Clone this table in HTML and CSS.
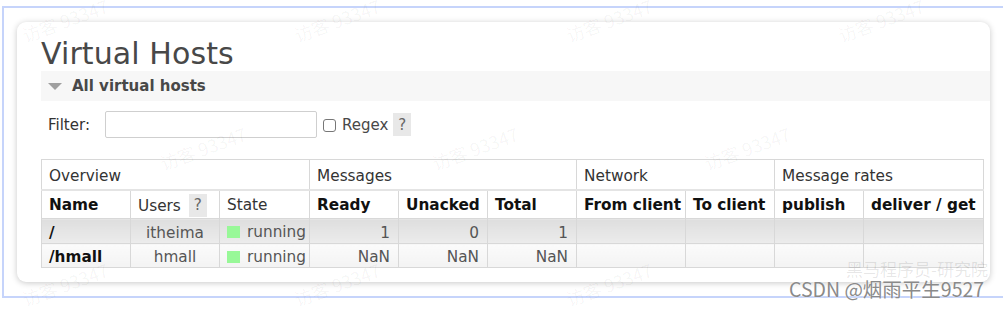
FILE: index.html
```html
<!DOCTYPE html>
<html lang="zh">
<head>
<meta charset="utf-8">
<title>Virtual Hosts</title>
<link rel="stylesheet" href="styles.css">
</head>
<body>
<div class="frame"></div>
<div class="page">
  <div class="card">
    <h1 class="title">Virtual Hosts</h1>
    <div class="section-bar"><span class="tri"></span><span>All virtual hosts</span></div>
    <div class="filter-row">
      <label class="filter-label">Filter:</label>
      <input class="filter-input" type="text">
      <span class="check"></span>
      <span class="regex">Regex</span>
      <span class="help">?</span>
    </div>
    <table class="list">
      <colgroup>
        <col class="w88"><col class="w89"><col class="w90"><col class="w89"><col class="w89"><col class="w89"><col class="w109"><col class="w89"><col class="w89"><col class="w120">
      </colgroup>
      <thead>
        <tr class="group">
          <th colspan="3">Overview</th>
          <th colspan="3">Messages</th>
          <th colspan="2">Network</th>
          <th colspan="2">Message rates</th>
        </tr>
        <tr class="cols">
          <th>Name</th>
          <th class="plain">Users <span class="help small">?</span></th>
          <th class="plain">State</th>
          <th>Ready</th>
          <th>Unacked</th>
          <th>Total</th>
          <th>From client</th>
          <th>To client</th>
          <th>publish</th>
          <th>deliver / get</th>
        </tr>
      </thead>
      <tbody>
        <tr class="alt1">
          <td class="name">/</td>
          <td class="c">itheima</td>
          <td><span class="state"><span class="green"></span>running</span></td>
          <td class="r">1</td>
          <td class="r">0</td>
          <td class="r">1</td>
          <td></td><td></td><td></td><td></td>
        </tr>
        <tr class="alt2">
          <td class="name">/hmall</td>
          <td class="c">hmall</td>
          <td><span class="state"><span class="green"></span>running</span></td>
          <td class="r">NaN</td>
          <td class="r">NaN</td>
          <td class="r">NaN</td>
          <td></td><td></td><td></td><td></td>
        </tr>
      </tbody>
    </table>
  </div>
</div>
<div class="wm w1">访客 93347</div>
<div class="wm w2">访客 93347</div>
<div class="wm w3">访客 93347</div>
<div class="wm w4">访客 93347</div>
<div class="wm w5">访客 93347</div>
<div class="wm w6">访客 93347</div>
<div class="wm w7">访客 93347</div>
<div class="wm w9">访客 93347</div>
<div class="wm w10">访客 93347</div>
<div class="wm w11">访客 93347</div>
<div class="mark-hm">黑马程序员-研究院</div>
<div class="mark-csdn">CSDN @烟雨平生9527</div>
</body>
</html>
```
FILE: styles.css
```css
html, body {
  margin: 0;
  padding: 0;
  background: #ffffff;
}
body {
  width: 1003px;
  height: 310px;
  position: relative;
  overflow: hidden;
  font-family: "DejaVu Sans", Verdana, sans-serif;
  color: #484848;
}
.frame {
  position: absolute;
  left: 2px;
  top: 6px;
  right: 0;
  height: 288px;
  border: 2px solid #c6d4fb;
  border-right: none;
}
.page {
  padding: 22px 0 0 17px;
  position: relative;
}
.card {
  width: 949px;
  height: 246px;
  padding: 14px 0 0 24px;
  background: #fff;
  border-radius: 9px;
  box-shadow: 0 1px 6px rgba(0,0,0,0.22);
}
.title {
  margin: 0;
  font-weight: normal;
  font-size: 30px;
  line-height: 35px;
  color: #484848;
  letter-spacing: 0.1px;
}
.section-bar {
  height: 30px;
  background: #f7f7f7;
  display: flex;
  align-items: center;
  font-weight: bold;
  font-size: 15px;
  color: #484848;
}
.tri {
  width: 0;
  height: 0;
  border-left: 7px solid transparent;
  border-right: 7px solid transparent;
  border-top: 7px solid #a0a0a0;
  margin: 1px 10px 0 7px;
}
.filter-row {
  display: flex;
  align-items: center;
  margin-top: 10px;
  height: 27px;
  font-size: 15px;
  color: #333;
}
.filter-label {
  margin-left: 7px;
  width: 57px;
}
.filter-input {
  width: 212px;
  height: 27px;
  box-sizing: border-box;
  border: 1px solid #cfcfcf;
  border-radius: 2px;
  margin: 0;
  padding: 0;
}
.check {
  width: 13px;
  height: 13px;
  box-sizing: border-box;
  border: 1px solid #777;
  border-radius: 3px;
  margin-left: 6px;
  margin-top: 1px;
}
.regex {
  margin-left: 6px;
  color: #484848;
}
.help {
  display: inline-flex;
  align-items: center;
  justify-content: center;
  width: 18px;
  height: 23px;
  background: #e8e8e8;
  color: #666;
  margin-left: 5px;
  font-weight: normal;
}
.help.small {
  margin-left: 3px;
}
.list {
  margin-top: 21px;
  border-collapse: collapse;
  table-layout: fixed;
  width: 943px;
  font-size: 15.3px;
  line-height: 18px;
}
.w88 { width: 89px; }
.w89 { width: 89px; }
.w90 { width: 90px; }
.w109 { width: 109px; }
.w120 { width: 120px; }
.list th, .list td {
  border: 1px solid #d8d8d8;
  padding: 3px 7px 0 7px;
  text-align: left;
  white-space: nowrap;
  overflow: hidden;
  vertical-align: middle;
}
.list tr.group { height: 30px; }
.list tr.cols { height: 29px; }
.list tr.alt1 { height: 25px; }
.list tr.alt2 { height: 24px; }
.list tr.group th {
  font-weight: normal;
  color: #333;
  border-bottom: 2px solid #e4e4e4;
}
.list tr.cols th {
  font-weight: bold;
  color: #111;
  padding-top: 2px;
}
.list tr.cols th.plain {
  font-weight: normal;
  color: #333;
}
.list td {
  color: #555;
}
.list tr.alt1 td {
  background: linear-gradient(#dedede, #ececec);
}
.list tr.alt2 td {
  background: linear-gradient(#fbfbfb, #f3f3f3);
}
.list td.name {
  font-weight: bold;
  color: #111;
}
.list td.c { text-align: center; }
.list td.r { text-align: right; padding-right: 8px; }
.state {
  display: inline-flex;
  align-items: center;
}
.green {
  width: 13px;
  height: 12px;
  background: #98f898;
  margin-right: 7px;
}
.wm {
  position: absolute;
  font-family: "Noto Sans CJK SC", "DejaVu Sans", sans-serif;
  font-size: 18px;
  line-height: 24px;
  color: rgba(0,0,0,0.045);
  transform: rotate(-20deg);
  white-space: nowrap;
  pointer-events: none;
}
.w1 { left: 20px; top: 8px; }
.w2 { left: 292px; top: 8px; }
.w3 { left: 564px; top: 8px; }
.w4 { left: 836px; top: 8px; }
.w5 { left: 158px; top: 136px; }
.w6 { left: 430px; top: 136px; }
.w7 { left: 702px; top: 136px; }
.w9 { left: 20px; top: 272px; }
.w10 { left: 292px; top: 272px; }
.w11 { left: 564px; top: 272px; }
.mark-hm {
  position: absolute;
  left: 846px;
  top: 258px;
  font-family: "Noto Sans CJK SC", sans-serif;
  font-size: 17px;
  line-height: 22px;
  color: rgba(0,0,0,0.1);
  white-space: nowrap;
}
.mark-csdn {
  position: absolute;
  left: 789px;
  top: 277px;
  font-family: "Noto Sans CJK SC", "DejaVu Sans", sans-serif;
  font-size: 19.5px;
  line-height: 24px;
  color: #8a8a8a;
  white-space: nowrap;
  text-shadow: 0 0 2px #fff;
}
```
